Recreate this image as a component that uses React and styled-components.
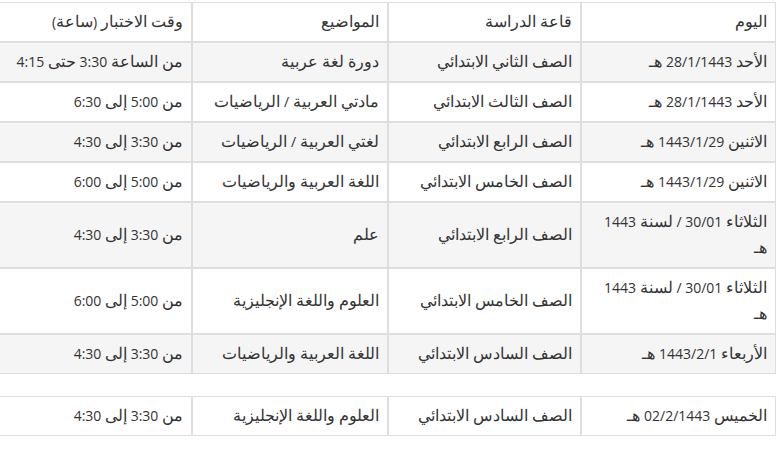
import React from "react";
import styled, { createGlobalStyle } from "styled-components";

const Global = createGlobalStyle`
  html, body { margin: 0; padding: 0; background: #fff; }
  body { font-family: "Open Sans", sans-serif; }
`;

const Wrapper = styled.div`
  direction: rtl;
  overflow: hidden;
  width: 779px;
  box-sizing: border-box;
  padding: 2px 3px 0 0;
`;

const Table = styled.table`
  direction: rtl;
  border-collapse: separate;
  border-spacing: 0;
  table-layout: fixed;
  width: 777px;
  font-size: 14px;
  color: #333;
  font-family: "Open Sans", sans-serif;
`;

const Row = styled.tr`
  background: ${(p) => (p.$striped ? "#f5f5f5" : "#fff")};
`;

const Cell = styled.td`
  border: 1px solid #dedede;
  padding: 6px 8px;
  line-height: 26px;
  text-align: right;
  vertical-align: middle;
  box-sizing: border-box;
`;

const Arabic = styled.span`
  font-size: 16px;
  line-height: 16px;
`;

const Spacer = styled.td`
  height: 22px;
  padding: 0;
`;

const header = ["اليوم", "قاعة الدراسة", "المواضيع", "وقت الاختبار (ساعة)"];

const rows = [
  ["الأحد 28/1/1443 هـ", "الصف الثاني الابتدائي", "دورة لغة عربية", "من الساعة 3:30 حتى 4:15"],
  ["الأحد 28/1/1443 هـ", "الصف الثالث الابتدائي", "مادتي العربية / الرياضيات", "من 5:00 إلى 6:30"],
  ["الاثنين 1443/1/29 هـ", "الصف الرابع الابتدائي", "لغتي العربية / الرياضيات", "من 3:30 إلى 4:30"],
  ["الاثنين 1443/1/29 هـ", "الصف الخامس الابتدائي", "اللغة العربية والرياضيات", "من 5:00 إلى 6:00"],
  ["الثلاثاء 30/01 / لسنة 1443 هـ", "الصف الرابع الابتدائي", "علم", "من 3:30 إلى 4:30"],
  ["الثلاثاء 30/01 / لسنة 1443 هـ", "الصف الخامس الابتدائي", "العلوم واللغة الإنجليزية", "من 5:00 إلى 6:00"],
  ["الأربعاء 1443/2/1 هـ", "الصف السادس الابتدائي", "اللغة العربية والرياضيات", "من 3:30 إلى 4:30"],
];

const lastRow = ["الخميس 02/2/1443 هـ", "الصف السادس الابتدائي", "العلوم واللغة الإنجليزية", "من 3:30 إلى 4:30"];

const widths = [195, 193, 196, 193];

function Text({ children }) {
  const parts = children.split(/([\u0600-\u06FF]+(?:\s+[\u0600-\u06FF]+)*)/);
  return parts.map((p, i) =>
    i % 2 === 1 ? <Arabic key={i}>{p}</Arabic> : <React.Fragment key={i}>{p}</React.Fragment>
  );
}

function DataRow({ cells, striped }) {
  return (
    <Row $striped={striped}>
      {cells.map((c, ci) => (
        <Cell key={ci}>
          <Text>{c}</Text>
        </Cell>
      ))}
    </Row>
  );
}

export default function App() {
  return (
    <>
      <Global />
      <Wrapper>
        <Table>
          <colgroup>
            {widths.map((w, i) => (
              <col key={i} style={{ width: w }} />
            ))}
          </colgroup>
          <tbody>
            <DataRow cells={header} />
            {rows.map((r, ri) => (
              <DataRow key={ri} cells={r} striped={ri % 2 === 0} />
            ))}
            <Row>
              <Spacer colSpan={4} />
            </Row>
            <DataRow cells={lastRow} />
          </tbody>
        </Table>
      </Wrapper>
    </>
  );
}
